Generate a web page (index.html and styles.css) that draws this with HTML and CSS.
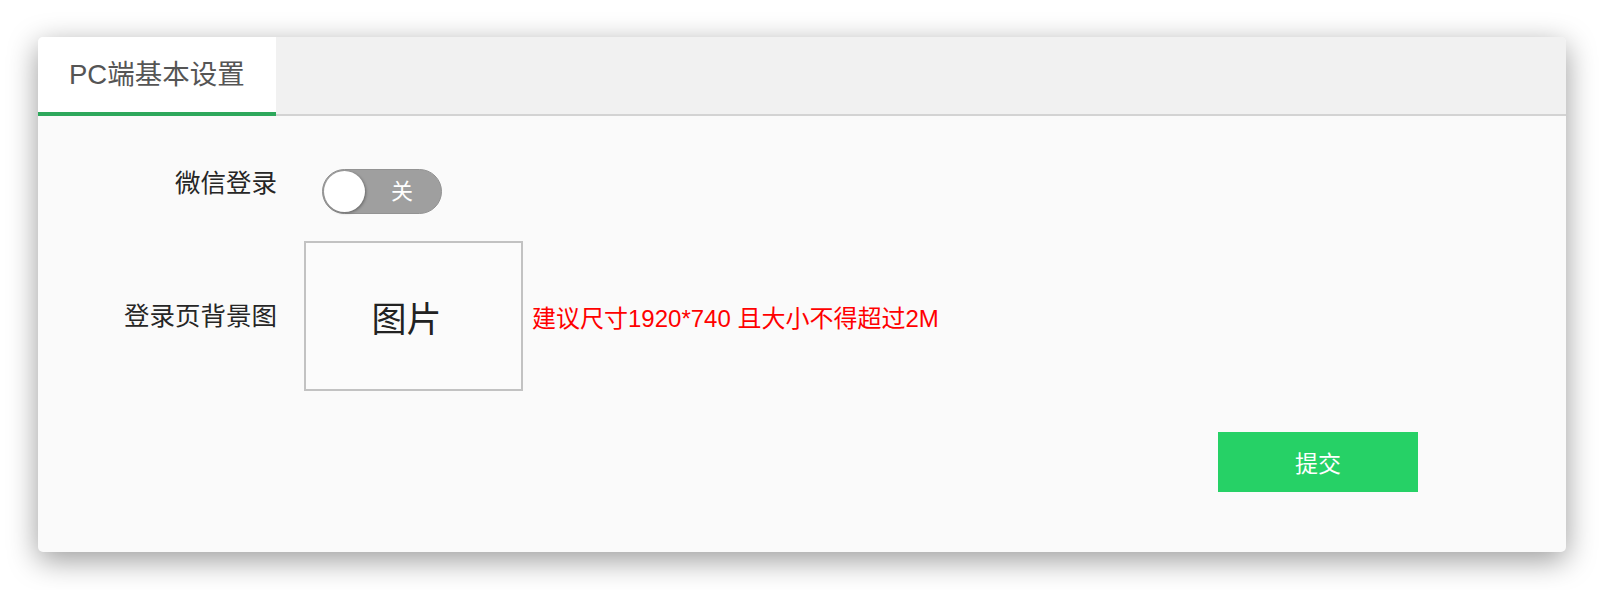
FILE: index.html
```html
<!DOCTYPE html>
<html lang="zh-CN">
<head>
<meta charset="utf-8">
<title>PC端基本设置</title>
<link rel="stylesheet" href="styles.css">
</head>
<body>
<div class="card">
  <div class="tabs">
    <div class="tab active">PC端基本设置</div>
  </div>
  <div class="form">
    <div class="row row-top">
      <div class="label">微信登录</div>
      <div class="switch">
        <span class="knob"></span>
        <span class="switch-text">关</span>
      </div>
    </div>
    <div class="row row-center">
      <div class="label">登录页背景图</div>
      <div class="picture">图片</div>
      <div class="hint">建议尺寸1920*740 且大小不得超过2M</div>
    </div>
    <div class="actions">
      <button class="submit" type="button">提交</button>
    </div>
  </div>
</div>
</body>
</html>
```

FILE: styles.css
```css
html, body {
  margin: 0;
  padding: 0;
  background: #ffffff;
}

body {
  font-family: "Liberation Sans", "Noto Sans CJK SC", sans-serif;
  padding: 37px 36px 38px 38px;
}

.card {
  width: 1528px;
  height: 515px;
  border-radius: 5px;
  overflow: hidden;
  background: #fafafa;
  box-shadow: 0 8px 30px rgba(0, 0, 0, 0.4);
  display: flex;
  flex-direction: column;
}

.tabs {
  display: flex;
  height: 77px;
  background: #f1f1f1;
  border-bottom: 2px solid #d3d3d3;
}

.tab {
  padding: 0 31px;
  height: 75px;
  line-height: 75px;
  margin-bottom: -2px;
  font-size: 27.5px;
  color: #555555;
  white-space: nowrap;
}

.tab.active {
  background: #ffffff;
  border-bottom: 4px solid #2ea85c;
}

.form {
  padding-top: 53px;
  display: flex;
  flex-direction: column;
}

.row {
  display: flex;
}

.row-top {
  align-items: flex-start;
}

.row-center {
  align-items: center;
  margin-top: 27px;
}

.label {
  width: 239px;
  text-align: right;
  font-size: 25.5px;
  line-height: 29px;
  color: #262626;
  white-space: nowrap;
}

.switch {
  margin-left: 45px;
  width: 120px;
  height: 45px;
  box-sizing: border-box;
  border-radius: 23px;
  background: #9f9f9f;
  border: 1px solid #939393;
  display: flex;
  align-items: center;
  padding-left: 1px;
}

.knob {
  width: 41px;
  height: 41px;
  border-radius: 50%;
  background: #ffffff;
  box-shadow: 1px 1px 3px rgba(0, 0, 0, 0.35);
  flex: none;
}

.switch-text {
  flex: 1;
  text-align: center;
  color: #ffffff;
  font-size: 22px;
  line-height: 1;
  padding-right: 2px;
}

.picture {
  margin-left: 27px;
  width: 219px;
  height: 150px;
  box-sizing: border-box;
  border: 2px solid #c2c2c2;
  padding-right: 14px;
  display: flex;
  align-items: center;
  justify-content: center;
  font-size: 35px;
  color: #222222;
  background: #fbfbfb;
}

.hint {
  margin-left: 9px;
  font-size: 24px;
  color: #ff0000;
  white-space: nowrap;
}

.actions {
  display: flex;
  justify-content: flex-end;
  padding-right: 148px;
  margin-top: 41px;
}

.submit {
  width: 200px;
  height: 60px;
  border: none;
  border-radius: 0;
  background: #26d166;
  color: #ffffff;
  font-family: "Liberation Sans", "Noto Sans CJK SC", sans-serif;
  font-size: 23px;
  padding: 0;
  cursor: pointer;
}
```
